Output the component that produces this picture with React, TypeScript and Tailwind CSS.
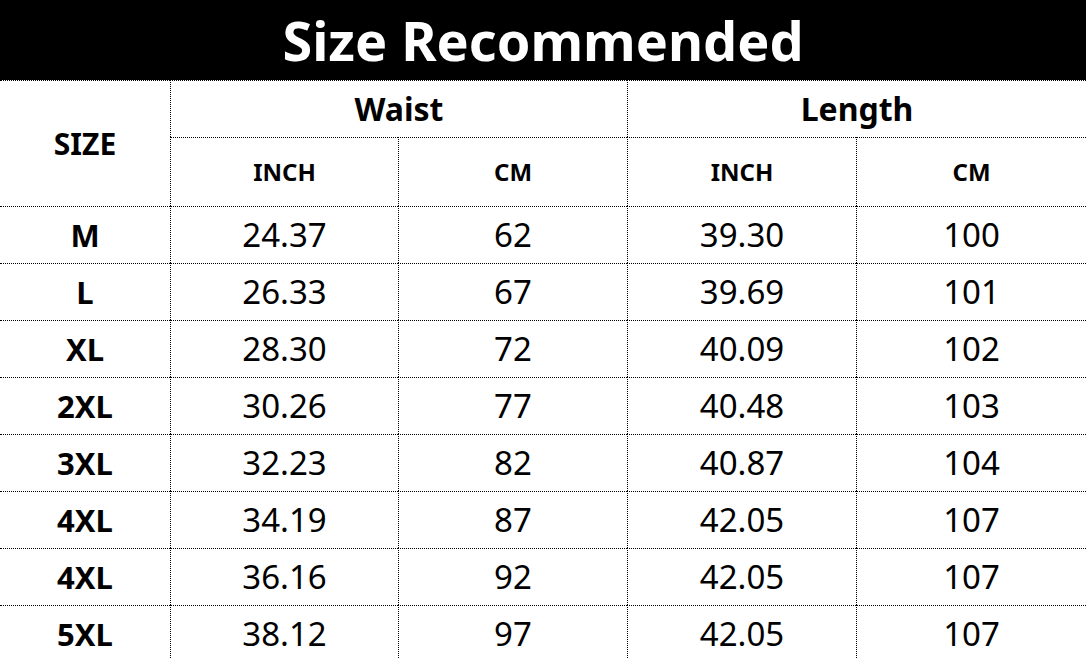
const rows: [string, string, string, string, string][] = [
  ['M', '24.37', '62', '39.30', '100'],
  ['L', '26.33', '67', '39.69', '101'],
  ['XL', '28.30', '72', '40.09', '102'],
  ['2XL', '30.26', '77', '40.48', '103'],
  ['3XL', '32.23', '82', '40.87', '104'],
  ['4XL', '34.19', '87', '42.05', '107'],
  ['4XL', '36.16', '92', '42.05', '107'],
  ['5XL', '38.12', '97', '42.05', '107'],
];

const cell = 'flex items-center justify-center border-t border-l border-dotted border-black';

export default function App() {
  return (
    <div className="w-[1086px] h-[659px] overflow-hidden bg-white text-black" style={{ fontFamily: '"Noto Sans", "Open Sans", sans-serif' }}>
      {/* Titre */}
      <div className="h-[80px] bg-black flex items-center justify-center">
        <h1 className="text-white font-bold text-[54px] leading-none">Size Recommended</h1>
      </div>

      {/* Tableau */}
      <div className="grid grid-cols-[170px_228px_229px_229px_230px] grid-rows-[57px_69px_repeat(8,57px)]">
        <div className={`${cell} border-l-0 row-span-2 font-bold text-[30px]`}>SIZE</div>
        <div className={`${cell} col-span-2 font-bold text-[32px]`}>Waist</div>
        <div className={`${cell} col-span-2 font-bold text-[32px]`}>Length</div>
        <div className={`${cell} font-bold text-[24px]`}>INCH</div>
        <div className={`${cell} font-bold text-[24px]`}>CM</div>
        <div className={`${cell} font-bold text-[24px]`}>INCH</div>
        <div className={`${cell} font-bold text-[24px]`}>CM</div>

        {rows.map((r, i) => (
          <div key={i} className="contents">
            <div className={`${cell} border-l-0 font-bold text-[31px]`}>{r[0]}</div>
            {r.slice(1).map((v, j) => (
              <div key={j} className={`${cell} text-[33px]`}>{v}</div>
            ))}
          </div>
        ))}
      </div>
    </div>
  );
}
